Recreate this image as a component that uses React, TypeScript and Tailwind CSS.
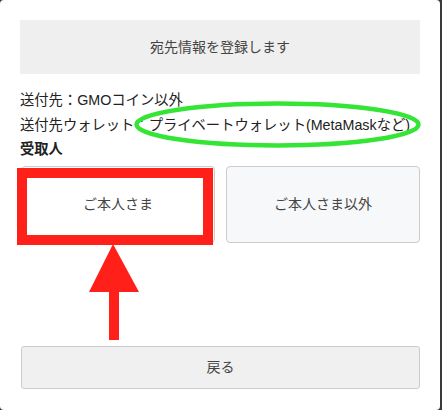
import React from "react";

export default function App() {
  return (
    <div className="w-[442px] h-[410px] bg-[#3a3a3a] font-['Liberation_Sans','Noto_Sans_CJK_JP',sans-serif]">
      <div className="relative w-[440px] h-[410px] bg-white rounded-[4px] px-[20px] pt-[20px] flex flex-col">
        <button className="w-full h-[54px] bg-[#efefef] text-[14px] text-[#444]">
          宛先情報を登録します
        </button>

        <div className="mt-[14px] text-[14.3px] leading-[24.5px] text-[#222]">
          <p>送付先：GMOコイン以外</p>
          <p>送付先ウォレット：プライベートウォレット(MetaMaskなど)</p>
          <p className="font-bold">受取人</p>
        </div>

        <div className="mt-[4px] grid grid-cols-2 gap-[11px] pl-[1px]">
          <button className="h-[77px] bg-white border border-[#cccccc] rounded-[4px] text-[14px] text-[#444]">
            ご本人さま
          </button>
          <button className="h-[77px] bg-[#f7f8fa] border border-[#cccccc] rounded-[4px] text-[14px] text-[#444]">
            ご本人さま以外
          </button>
        </div>

        <button className="mt-[103px] ml-[1px] h-[43px] bg-[#f0f0f0] border border-[#cccccc] rounded-[3px] text-[14px] text-[#444]">
          戻る
        </button>

        {/* annotations */}
        <svg className="absolute left-0 top-0 pointer-events-none" width="440" height="410">
          <ellipse cx="277.5" cy="124.5" rx="141" ry="21" fill="none" stroke="#35e535" strokeWidth="4.5" />
        </svg>
        <div className="absolute left-[17px] top-[168px] w-[196px] h-[77px] border-[10px] border-[#ff2019]" />
        <svg className="absolute left-[89px] top-[244px]" width="50" height="96" viewBox="0 0 50 96">
          <polygon points="24,0 0,48 50,48" fill="#ff2019" />
          <rect x="20" y="47" width="10" height="49" fill="#ff2019" />
        </svg>
      </div>
    </div>
  );
}
